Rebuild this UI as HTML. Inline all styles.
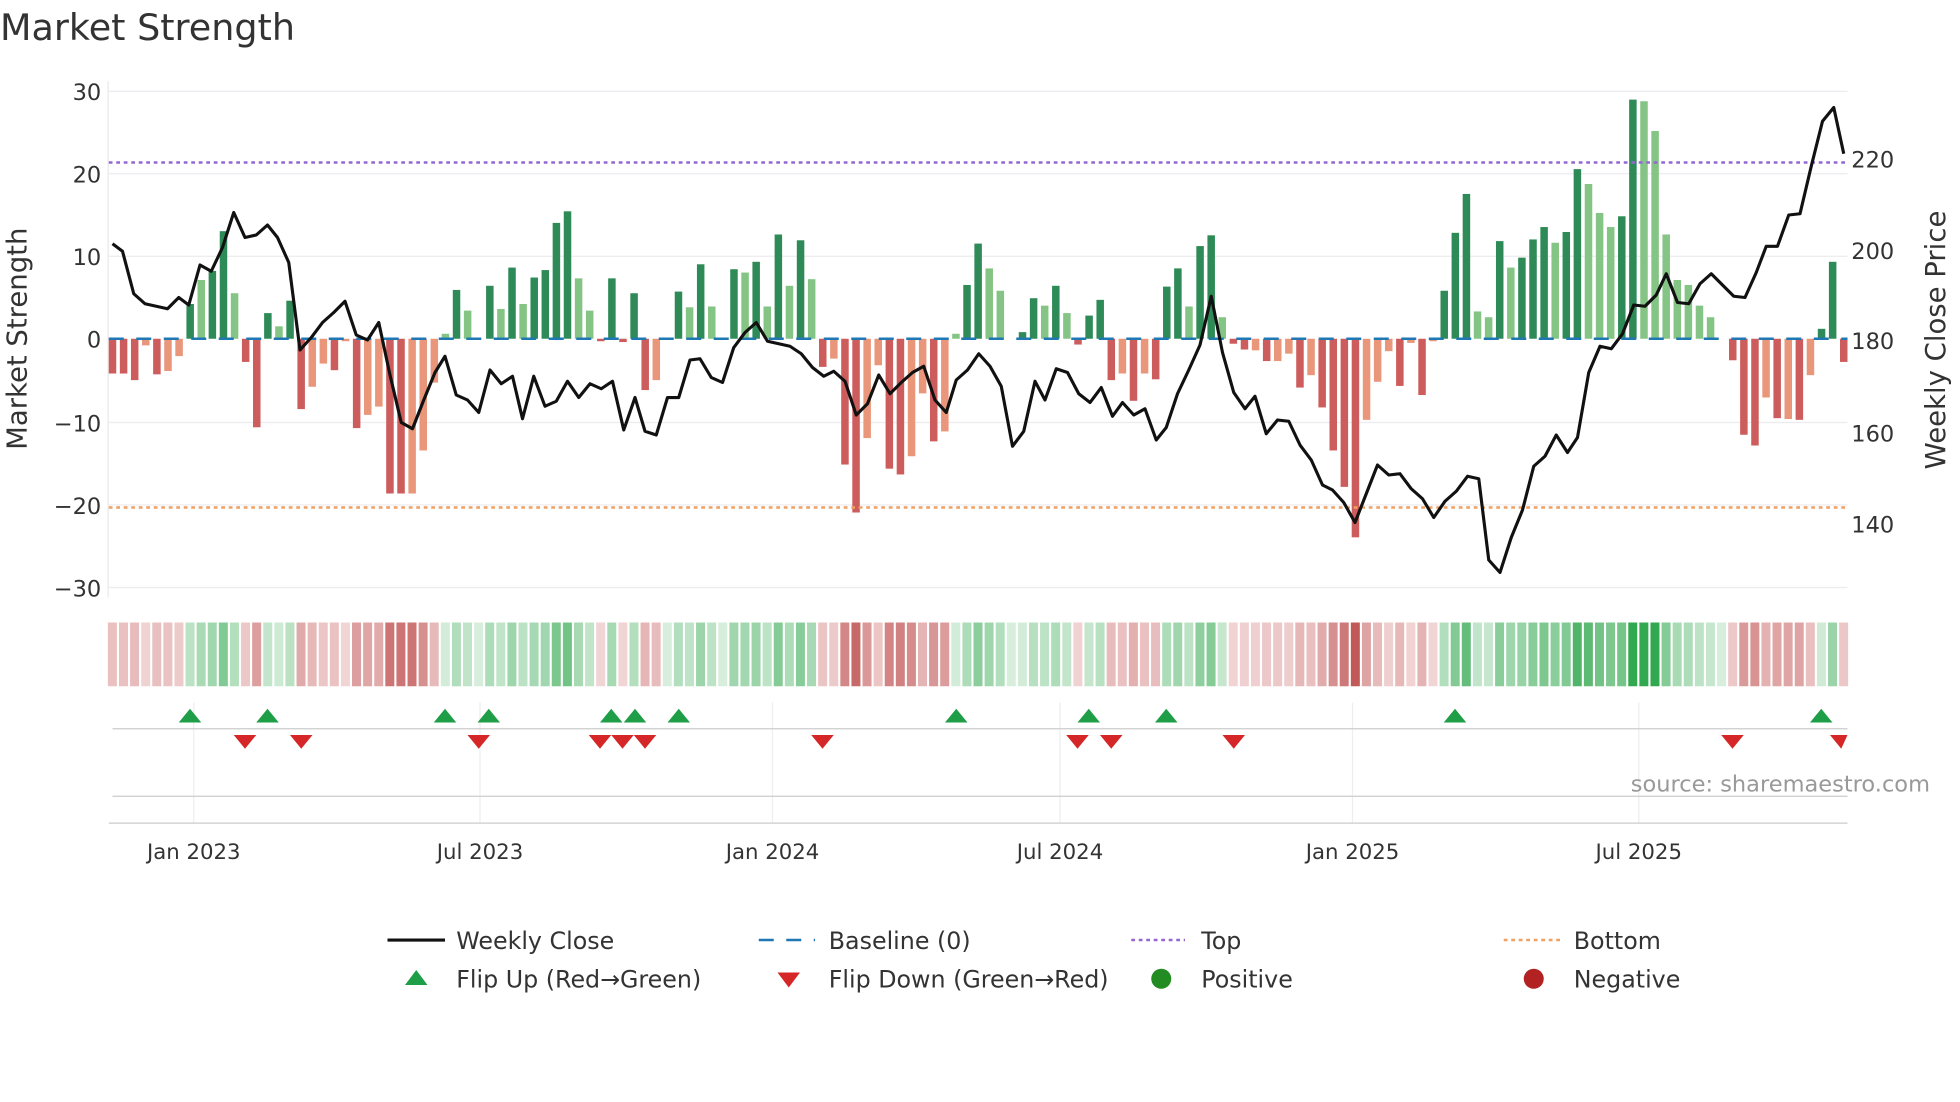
<!DOCTYPE html>
<html><head><meta charset="utf-8"><style>
html,body{margin:0;padding:0;background:#fff;}
svg{display:block;font-family:"DejaVu Sans","Liberation Sans",sans-serif;}
</style></head><body>
<svg id="s" width="1960" height="1102" viewBox="0 0 1568 881.6" xmlns="http://www.w3.org/2000/svg">
<rect width="1568" height="882" fill="#fff"/>
<text x="0" y="32" font-size="29.2" fill="#333">Market Strength</text>
<g stroke="#ececf0" stroke-width="1">
<line x1="87" y1="73" x2="1478" y2="73"/><line x1="87" y1="139" x2="1478" y2="139"/><line x1="87" y1="205" x2="1478" y2="205"/><line x1="87" y1="338" x2="1478" y2="338"/><line x1="87" y1="404" x2="1478" y2="404"/><line x1="87" y1="470" x2="1478" y2="470"/>
</g>
<line x1="86.5" y1="65" x2="86.5" y2="478" stroke="#e8e8e8"/>
<g font-size="18" fill="#333" text-anchor="end">
<text x="81" y="80">30</text><text x="81" y="146">20</text><text x="81" y="212">10</text><text x="81" y="278">0</text><text x="81" y="345">−10</text><text x="81" y="411">−20</text><text x="81" y="477">−30</text>
</g>
<g font-size="18" fill="#333">
<text x="1481" y="134">220</text><text x="1481" y="207">200</text><text x="1481" y="279">180</text><text x="1481" y="353">160</text><text x="1481" y="426">140</text>
</g>
<text transform="translate(21,271) rotate(-90)" font-size="22" fill="#333" text-anchor="middle">Market Strength</text>
<text transform="translate(1556,272) rotate(-90)" font-size="22" fill="#333" text-anchor="middle">Weekly Close Price</text>
<g id="bars"></g>
<line x1="87" y1="271" x2="1478" y2="271" stroke="#1f77b4" stroke-width="2" stroke-dasharray="12,10"/>
<line x1="87" y1="130" x2="1478" y2="130" stroke="#9467d4" stroke-width="2" stroke-dasharray="3,3"/>
<line x1="87" y1="406" x2="1478" y2="406" stroke="#f0a060" stroke-width="2" stroke-dasharray="3,3"/>
<polyline id="pl" fill="none" stroke="#111" stroke-width="2.5" stroke-linejoin="round"/>
<g id="heat"></g>
<g stroke="#eeeeee"><line x1="155" y1="562" x2="155" y2="658"/><line x1="384" y1="562" x2="384" y2="658"/><line x1="618" y1="562" x2="618" y2="658"/><line x1="848" y1="562" x2="848" y2="658"/><line x1="1082" y1="562" x2="1082" y2="658"/><line x1="1311" y1="562" x2="1311" y2="658"/></g>
<line x1="90" y1="583" x2="1478" y2="583" stroke="#ccc"/>
<line x1="90" y1="637" x2="1478" y2="637" stroke="#ccc"/>
<line x1="87" y1="658.5" x2="1478" y2="658.5" stroke="#ccc"/>
<g id="mk"></g>
<text x="1544" y="633" font-size="18" fill="#999" text-anchor="end">source: sharemaestro.com</text>
<g font-size="17" fill="#333" text-anchor="middle">
<text x="155" y="687">Jan 2023</text><text x="384" y="687">Jul 2023</text><text x="618" y="687">Jan 2024</text><text x="848" y="687">Jul 2024</text><text x="1082" y="687">Jan 2025</text><text x="1311" y="687">Jul 2025</text>
</g>
<g font-size="19" fill="#333">
<line x1="310" y1="752" x2="356" y2="752" stroke="#111" stroke-width="2.5"/><text x="365" y="759">Weekly Close</text>
<line x1="607" y1="752" x2="652" y2="752" stroke="#1f77b4" stroke-width="2" stroke-dasharray="12,10"/><text x="663" y="759">Baseline (0)</text>
<line x1="905" y1="752" x2="948" y2="752" stroke="#9467d4" stroke-width="2" stroke-dasharray="3,3"/><text x="961" y="759">Top</text>
<line x1="1203" y1="752" x2="1248" y2="752" stroke="#f0a060" stroke-width="2" stroke-dasharray="3,3"/><text x="1259" y="759">Bottom</text>
<polygon points="324,788 342,788 333,776" fill="#1e9e46"/><text x="365" y="790">Flip Up (Red→Green)</text>
<polygon points="622,778 640,778 631,790" fill="#d62728"/><text x="663" y="790">Flip Down (Green→Red)</text>
<circle cx="929" cy="783" r="8" fill="#228b22"/><text x="961" y="790">Positive</text>
<circle cx="1227" cy="783" r="8" fill="#b22222"/><text x="1259" y="790">Negative</text>
</g>
</svg>
<script>
var V="-4.2R,-4.2R,-5R,-0.8O,-4.3R,-3.9O,-2.1O,4.2D,7.1L,8.2D,13D,5.5L,-2.8R,-10.7R,3.1D,1.5L,4.6D,-8.5R,-5.8O,-3O,-3.8R,-0.3O,-10.8R,-9.2O,-8.2O,-18.7R,-18.7R,-18.7O,-13.5O,-5.3O,0.6L,5.9D,3.4L,0Z,6.4D,3.6L,8.6D,4.2L,7.4D,8.3D,14D,15.4D,7.3L,3.4L,-0.3R,7.3D,-0.4R,5.5D,-6.2R,-5O,0Z,5.7D,3.8L,9D,3.9L,0Z,8.4D,8L,9.3D,3.9L,12.6D,6.4L,11.9D,7.2L,-3.4R,-2.4O,-15.2R,-21R,-12O,-3.2O,-15.7R,-16.4R,-14.2O,-6.6O,-12.4R,-11.2O,0.6L,6.5D,11.5D,8.5L,5.8L,0Z,0.8D,4.9D,4L,6.4D,3.1L,-0.7R,2.8D,4.7D,-5R,-4.2O,-7.5R,-4.2O,-4.9R,6.3D,8.5D,3.9L,11.2D,12.5D,2.6L,-0.6R,-1.3R,-1.4O,-2.7R,-2.7O,-1.8O,-5.9R,-4.4O,-8.3R,-13.5R,-17.9R,-24R,-9.8O,-5.2O,-1.5O,-5.7R,-0.5O,-6.8R,-0.3O,5.8D,12.8D,17.5D,3.3L,2.6L,11.8D,8.6L,9.8D,12D,13.5D,11.6L,12.9D,20.5D,18.7L,15.2L,13.5L,14.8D,28.9D,28.7L,25.1L,12.6L,7.1L,6.5L,4L,2.6L,0Z,-2.6R,-11.6R,-12.9R,-7.1O,-9.6R,-9.7O,-9.8R,-4.4O,1.2D,9.3D,-2.8R".split(",");
var C={R:"#cd5c5c",O:"#e9967a",D:"#2e8b57",L:"#84c484",Z:"#fff"};
var ns="http://www.w3.org/2000/svg",bars=document.getElementById("bars"),heat=document.getElementById("heat");
var n=V.length,dx=1385/(n-1);
function mk(t,a,p){var e=document.createElementNS(ns,t);for(var k in a)e.setAttribute(k,a[k]);p.appendChild(e);return e;}
for(var i=0;i<n;i++){var c=V[i].slice(-1),v=parseFloat(V[i]),x=90+i*dx;
 if(c!="Z"){var h=Math.abs(v)*6.62,y=v>0?271-h:271;mk("rect",{x:x-3,y:y,width:6,height:h,fill:C[c]},bars);}
 var a=Math.min(Math.abs(v)/25,1),col;
 if(v>=0){var r=Math.round(215-165*a),g=Math.round(238-70*a),b=Math.round(220-140*a);col="rgb("+r+","+g+","+b+")";}
 else{var r=Math.round(242-50*a),g=Math.round(214-130*a),b=Math.round(214-130*a);col="rgb("+r+","+g+","+b+")";}
 mk("rect",{x:x-3.7,y:498,width:7.2,height:51,fill:col},heat);}
var P=[[90,195],[98,201],[107,235],[116,243],[125,245],[134,247],[143,238],[151,244],[160,212],[169,217],[178,198],[187,170],[196,190],[205,188],[214,180],[222,190],[231,210],[240,280],[249,270],[258,258],[267,250],[276,241],[285,268],[294,272],[303,258],[312,300],[321,338],[330,343],[339,320],[348,298],[356,285],[365,316],[374,320],[383,330],[392,296],[401,307],[410,301],[418,335],[427,301],[436,325],[445,321],[454,305],[463,318],[472,307],[481,311],[490,305],[499,344],[508,318],[516,345],[525,348],[534,318],[543,318],[552,288],[560,287],[569,302],[578,306],[587,278],[596,266],[605,258],[614,273],[623,275],[632,277],[641,283],[650,294],[659,301],[667,297],[676,305],[685,332],[694,323],[703,300],[712,315],[721,306],[730,298],[739,293],[748,320],[757,330],[765,304],[774,296],[783,283],[792,293],[801,309],[810,357],[819,345],[828,305],[836,320],[845,295],[854,298],[863,315],[872,322],[881,310],[890,333],[898,322],[907,332],[916,327],[925,352],[933,342],[942,315],[951,296],[960,276],[969,237],[978,282],[987,314],[996,327],[1004,317],[1013,347],[1022,336],[1031,337],[1040,356],[1049,368],[1058,388],[1066,392],[1075,402],[1084,418],[1093,395],[1102,372],[1111,380],[1120,379],[1129,391],[1138,399],[1147,414],[1156,401],[1165,393],[1174,381],[1183,383],[1191,448],[1200,458],[1209,430],[1218,408],[1227,373],[1236,365],[1245,348],[1254,362],[1262,350],[1271,298],[1280,277],[1289,279],[1298,267],[1307,244],[1316,245],[1325,236],[1333,219],[1342,242],[1351,243],[1360,227],[1369,219],[1378,228],[1387,237],[1396,238],[1405,218],[1413,197],[1422,197],[1431,172],[1440,171],[1449,133],[1458,97],[1467,86],[1475,123]];
document.getElementById("pl").setAttribute("points",P.map(function(p){return p.join(",")}).join(" "));
var m=document.getElementById("mk");
[152,214,356,391,489,508,543,765,871,933,1164,1457].forEach(function(x){mk("polygon",{points:(x-9)+",578 "+(x+9)+",578 "+x+",567",fill:"#1e9e46"},m);});
[196,241,383,480,498,516,658,862,889,987,1386,1473].forEach(function(x){var x2=Math.min(x+9,1478);mk("polygon",{points:(x-9)+",588 "+x2+",588 "+x+",599",fill:"#d62728"},m);});
</script>
</body></html>
